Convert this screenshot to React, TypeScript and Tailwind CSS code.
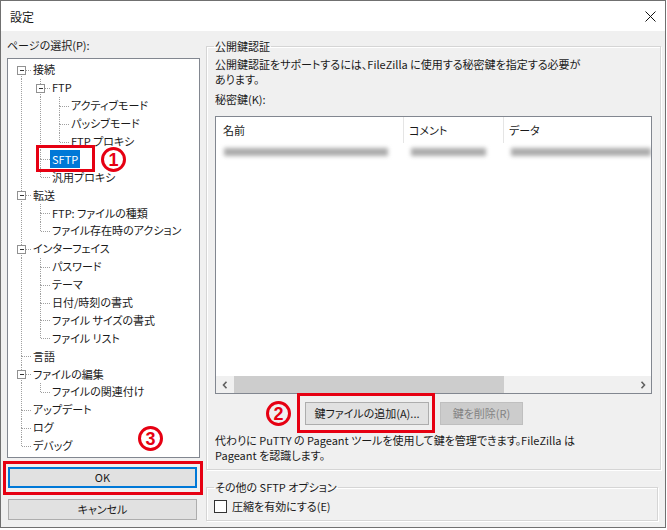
import type { ReactNode } from 'react'

type TreeNode = { label: string; children?: TreeNode[]; selected?: boolean }

type Row = {
  label: string
  guides: boolean[]
  first: boolean
  last: boolean
  expandable: boolean
  selected?: boolean
}

const tree: TreeNode[] = [
  {
    label: '接続',
    children: [
      { label: 'FTP', children: [{ label: 'アクティブモード' }, { label: 'パッシブモード' }, { label: 'FTP プロキシ' }] },
      { label: 'SFTP', selected: true },
      { label: '汎用プロキシ' },
    ],
  },
  { label: '転送', children: [{ label: 'FTP: ファイルの種類' }, { label: 'ファイル存在時のアクション' }] },
  {
    label: 'インターフェイス',
    children: [
      { label: 'パスワード' },
      { label: 'テーマ' },
      { label: '日付/時刻の書式' },
      { label: 'ファイル サイズの書式' },
      { label: 'ファイル リスト' },
    ],
  },
  { label: '言語' },
  { label: 'ファイルの編集', children: [{ label: 'ファイルの関連付け' }] },
  { label: 'アップデート' },
  { label: 'ログ' },
  { label: 'デバッグ' },
]

function flatten(nodes: TreeNode[], guides: boolean[] = []): Row[] {
  return nodes.flatMap((n, i) => {
    const last = i === nodes.length - 1
    const row: Row = {
      label: n.label,
      guides,
      first: guides.length === 0 && i === 0,
      last,
      expandable: !!n.children,
      selected: n.selected,
    }
    return [row, ...(n.children ? flatten(n.children, [...guides, !last]) : [])]
  })
}

const dot = { stroke: '#a0a0a0', strokeWidth: 1, strokeDasharray: '1 1', shapeRendering: 'crispEdges' as const }

function Guide({ on }: { on: boolean }) {
  return (
    <svg width="19" height="18" className="shrink-0 overflow-visible">
      {on && <line x1="9.5" y1="0" x2="9.5" y2="18" {...dot} />}
    </svg>
  )
}

function Connector({ row }: { row: Row }) {
  return (
    <svg width="19" height="18" className="shrink-0 overflow-visible">
      {!row.first && <line x1="9.5" y1="0" x2="9.5" y2="9" {...dot} />}
      {!row.last && <line x1="9.5" y1="9" x2="9.5" y2="18" {...dot} />}
      <line x1="10" y1="9.5" x2="19" y2="9.5" {...dot} />
      {row.expandable && (
        <>
          <rect x="5.5" y="5.5" width="8" height="8" fill="#fff" stroke="#919191" shapeRendering="crispEdges" />
          <line x1="7.5" y1="9.5" x2="12" y2="9.5" stroke="#333" shapeRendering="crispEdges" />
        </>
      )}
    </svg>
  )
}

function Marker({ n, className }: { n: string; className: string }) {
  return (
    <div
      className={`absolute w-[25px] h-[25px] rounded-full border-[3px] border-[#e60012] text-[#e60012] flex items-center justify-center font-['Liberation_Sans',sans-serif] font-bold text-[18px] leading-none ${className}`}
    >
      {n}
    </div>
  )
}

function Chevron({ dir }: { dir: 'l' | 'r' }) {
  return (
    <svg width="6" height="8" viewBox="0 0 6 8">
      <path d={dir === 'l' ? 'M4.5 0.8 L1.5 4 L4.5 7.2' : 'M1.5 0.8 L4.5 4 L1.5 7.2'} fill="none" stroke="#606060" strokeWidth="1.6" />
    </svg>
  )
}

function Button({ children, className }: { children: ReactNode; className: string }) {
  return <div className={`flex items-center justify-center ${className}`}>{children}</div>
}

export default function App() {
  const rows = flatten(tree)

  return (
    <div className="w-[666px] h-[528px] relative border border-[#707070] bg-[#f0f0f0] text-[11px] leading-[15px] text-[#1a1a1a] font-['Noto_Sans_CJK_JP',sans-serif] [font-feature-settings:'palt'] overflow-hidden">
      <div className="h-[30px] bg-white flex items-center justify-between pl-[9px] pr-[9px]">
        <span className="text-[12px]">設定</span>
        <svg width="11" height="11" viewBox="0 0 11 11">
          <path d="M0.5 0.5 L10.5 10.5 M10.5 0.5 L0.5 10.5" stroke="#111" strokeWidth="1" />
        </svg>
      </div>

      <div className="flex px-[6px] gap-[6px]">
        <div className="w-[193px] flex flex-col pt-[6px]">
          <div className="leading-[16px]">ページの選択(P):</div>
          <div className="mt-[5px] h-[400px] border border-[#828790] bg-white pt-[2px] pl-[4px]">
            {rows.map((r, i) => (
              <div key={i} className="h-[17.9px] flex items-center whitespace-nowrap">
                {r.guides.map((g, j) => (
                  <Guide key={j} on={g} />
                ))}
                <Connector row={r} />
                <span className={`h-full flex items-center px-[2px] ${r.selected ? 'bg-[#0078d7] text-white' : ''}`}>{r.label}</span>
              </div>
            ))}
          </div>
          <Button className="mt-[9px] ml-[1px] w-[189px] h-[21px] border-2 border-[#0078d7] bg-[#e1e1e1]">OK</Button>
          <Button className="mt-[11px] ml-[1px] w-[189px] h-[21px] border border-[#adadad] bg-[#e1e1e1]">キャンセル</Button>
        </div>

        <div className="w-[452px] flex flex-col pt-[7px]">
          <fieldset className="border border-[#d5d5d5] px-[8px] pb-[6px] shadow-[inset_1px_1px_0_#fff,1px_1px_0_#fff]">
            <legend className="leading-[16px] px-[1px] -ml-[1px]">公開鍵認証</legend>
            <div className="mt-[3px]">
              公開鍵認証をサポートするには、FileZilla に使用する秘密鍵を指定する必要が
              <br />
              あります。
            </div>
            <div className="mt-[5px]">秘密鍵(K):</div>
            <div className="mt-[9px] h-[278px] border border-[#828790] bg-white flex flex-col">
              <div className="h-[26px] flex">
                <div className="w-[188px] pl-[7px] flex items-center border-r border-[#e5e5e5]">名前</div>
                <div className="w-[100px] pl-[5px] flex items-center border-r border-[#e5e5e5]">コメント</div>
                <div className="flex-1 pl-[5px] flex items-center">データ</div>
              </div>
              <div className="h-[18px] flex items-center pl-[8px] overflow-hidden">
                <div className="w-[164px] h-[8px] bg-[#ababab] blur-[2px] shrink-0" />
                <div className="ml-[23px] w-[75px] h-[8px] bg-[#ababab] blur-[2px] shrink-0" />
                <div className="ml-[25px] w-[140px] h-[8px] bg-[#ababab] blur-[2px] shrink-0" />
              </div>
              <div className="flex-1" />
              <div className="h-[17px] flex bg-[#f0f0f0]">
                <div className="w-[17px] flex items-center justify-center">
                  <Chevron dir="l" />
                </div>
                <div className="ml-[1px] w-[270px] bg-[#cdcdcd]" />
                <div className="flex-1" />
                <div className="w-[17px] flex items-center justify-center">
                  <Chevron dir="r" />
                </div>
              </div>
            </div>
            <div className="mt-[8px] flex ml-[90px] gap-[11px]">
              <Button className="w-[124px] h-[23px] border border-[#adadad] bg-[#e1e1e1]">鍵ファイルの追加(A)...</Button>
              <Button className="w-[83px] h-[23px] border border-[#bfbfbf] bg-[#cccccc] text-[#838383]">鍵を削除(R)</Button>
            </div>
            <div className="mt-[8px]">
              代わりに PuTTY の Pageant ツールを使用して鍵を管理できます。FileZilla は
              <br />
              Pageant を認識します。
            </div>
          </fieldset>

          <fieldset className="mt-[9px] border border-[#d5d5d5] px-[8px] pb-[7px] shadow-[inset_1px_1px_0_#fff,1px_1px_0_#fff]">
            <legend className="leading-[16px] px-[1px] -ml-[1px]">その他の SFTP オプション</legend>
            <label className="mt-[5px] h-[13px] flex items-center gap-[5px] -ml-[1px]">
              <span className="w-[13px] h-[13px] border border-[#333] bg-white shrink-0" />
              <span>圧縮を有効にする(E)</span>
            </label>
          </fieldset>
        </div>
      </div>

      <div className="absolute left-[35px] top-[144px] w-[59px] h-[27px] border-[3px] border-[#e60012]" />
      <Marker n="1" className="left-[100px] top-[146px]" />
      <div className="absolute left-[296px] top-[392px] w-[138px] h-[40px] border-[3px] border-[#e60012]" />
      <Marker n="2" className="left-[265px] top-[400px]" />
      <Marker n="3" className="left-[137px] top-[425px]" />
      <div className="absolute left-[2px] top-[460px] w-[200px] h-[34px] border-[3px] border-[#e60012]" />
    </div>
  )
}
